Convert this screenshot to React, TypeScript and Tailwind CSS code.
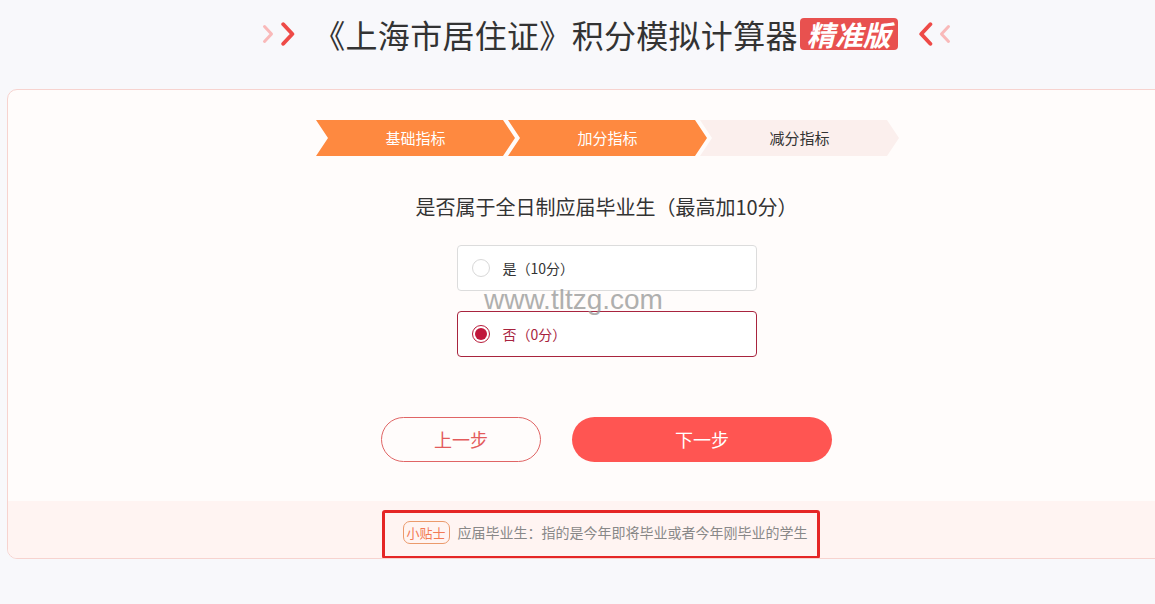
import React from "react";

const font = { fontFamily: '"Noto Sans CJK SC", "Noto Sans", sans-serif' };

function Chevron({ dir, color, size }: { dir: "right" | "left"; color: string; size: number }) {
  return (
    <svg width={size * 0.6} height={size} viewBox="0 0 12 20">
      {dir === "right" ? (
        <path d="M2.5 2.5 L9.5 10 L2.5 17.5" fill="none" stroke={color} strokeWidth="3" strokeLinecap="round" strokeLinejoin="round" />
      ) : (
        <path d="M9.5 2.5 L2.5 10 L9.5 17.5" fill="none" stroke={color} strokeWidth="3" strokeLinecap="round" strokeLinejoin="round" />
      )}
    </svg>
  );
}

function Step({ label, active }: { label: string; active: boolean }) {
  return (
    <div
      className={`w-[199px] h-9 -ml-[7px] first:ml-0 flex items-center justify-center text-[15px] [clip-path:polygon(0_0,calc(100%_-_12px)_0,100%_50%,calc(100%_-_12px)_100%,0_100%,12px_50%)] ${
        active ? "bg-[#fe8940] text-white" : "bg-[#fbefed] text-[#333]"
      }`}
    >
      {label}
    </div>
  );
}

function Option({ label, selected }: { label: string; selected: boolean }) {
  return (
    <div
      className={`w-[300px] h-[46px] rounded-[4px] border bg-white flex items-center pl-[14px] gap-[13px] text-[14px] ${
        selected ? "border-[#a8243e] text-[#a8243e]" : "border-[#dcdcdc] text-[#333]"
      }`}
    >
      {selected ? (
        <span className="w-[18px] h-[18px] rounded-full border border-[#b81c3a] flex items-center justify-center">
          <span className="w-[12px] h-[12px] rounded-full bg-[#c0173b]" />
        </span>
      ) : (
        <span className="w-[18px] h-[18px] rounded-full border border-[#d8d8d8] bg-white" />
      )}
      <span>{label}</span>
    </div>
  );
}

export default function App() {
  return (
    <div className="w-full h-[604px] overflow-hidden bg-[#f8f8fb]" style={font}>
      <div className="w-[1213px]">
        {/* header */}
        <div className="h-[89px] flex items-start justify-center pt-[16px]">
          <div className="flex items-center h-[36px]">
            <div className="flex items-center gap-[6px] mr-[18px]">
              <Chevron dir="right" color="#f9b9b9" size={20} />
              <Chevron dir="right" color="#ee4a47" size={26} />
            </div>
            <span className="text-[32px] leading-none text-[#333] tracking-[0.3px]">《上海市居住证》积分模拟计算器</span>
            <span className="ml-[2px] bg-[#e8514f] text-white text-[28px] leading-none font-bold italic px-[7px] py-[2px] rounded-[4px]">
              精准版
            </span>
            <div className="flex items-center gap-[6px] ml-[20px]">
              <Chevron dir="left" color="#ee4a47" size={26} />
              <Chevron dir="left" color="#f9b9b9" size={20} />
            </div>
          </div>
        </div>

        {/* card */}
        <div className="ml-[7px] w-[1199px] h-[470px] rounded-[10px] border border-[#f7d3cf] bg-[#fffcfb] overflow-hidden flex flex-col">
          <div className="flex-1 flex flex-col items-center relative">
            <div className="flex mt-[30px] ml-[2px]">
              <Step label="基础指标" active />
              <Step label="加分指标" active />
              <Step label="减分指标" active={false} />
            </div>
            <div className="mt-[41px] text-[20px] text-[#333] leading-none">是否属于全日制应届毕业生（最高加10分）</div>
            <div className="mt-[28px] flex flex-col gap-[20px]">
              <Option label="是（10分）" selected={false} />
              <Option label="否（0分）" selected />
            </div>
            <div className="mt-[60px] flex gap-[31px]">
              <button className="w-[160px] h-[45px] rounded-full border border-[#e06565] text-[#e35b5b] text-[18px]">上一步</button>
              <button className="w-[260px] h-[45px] rounded-full bg-[#ff5552] text-white text-[18px]">下一步</button>
            </div>
            <div
              className="absolute left-[476px] top-[196px] text-[28px] text-[#9c9c9c] opacity-80 leading-none"
              style={{ fontFamily: '"Liberation Sans", Arial, sans-serif' }}
            >
              www.tltzg.com
            </div>
          </div>
          <div className="h-[57px] bg-[#fff4f2] flex justify-center">
            <div className="mt-[9px] ml-[-12px] w-[438px] h-[49px] border-[3px] border-[#e52626] rounded-[3px] flex items-center pl-[18px] pb-[4px]">
              <span className="border border-[#eb9a6c] text-[#f27a55] text-[13px] leading-none rounded-[7px] px-[3px] py-[4px]">小贴士</span>
              <span className="ml-[8px] text-[14px] text-[#888]">应届毕业生：指的是今年即将毕业或者今年刚毕业的学生</span>
            </div>
          </div>
        </div>
      </div>
    </div>
  );
}
